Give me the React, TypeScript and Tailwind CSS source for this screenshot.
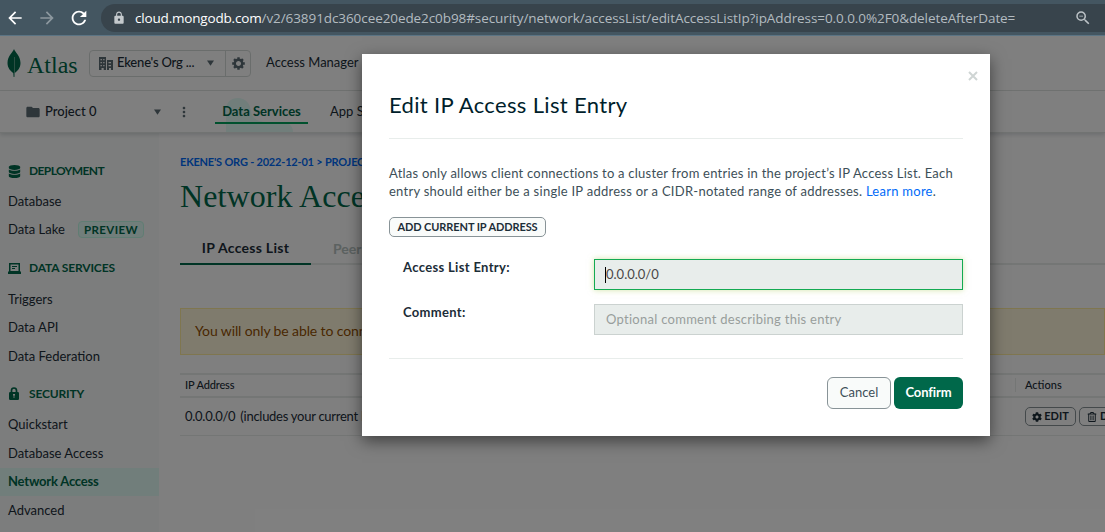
import React from "react";
import { FaDatabase, FaCog, FaRegTrashAlt } from "react-icons/fa";
import { MdFolder, MdLock, MdMoreVert, MdZoomOut, MdRefresh, MdArrowBack, MdArrowForward } from "react-icons/md";

function Caret({ className }: { className?: string }) {
  return (
    <svg viewBox="0 0 8 6" className={`h-[6px] w-[7px] shrink-0 fill-[#5c6c75] ${className ?? ""}`}>
      <path d="M0 0h8L4 6z" />
    </svg>
  );
}

function BrowserBar() {
  return (
    <div className="flex h-[36px] items-center border-b border-[#5b7484] bg-[#445661]">
      <MdArrowBack className="ml-[5px] size-[20px] shrink-0 text-white" />
      <MdArrowForward className="ml-[12px] size-[20px] shrink-0 text-[#8d989f]" />
      <MdRefresh className="ml-[11px] size-[22px] shrink-0 text-white" />
      <div className="ml-[11px] flex h-[28px] flex-1 items-center rounded-l-full bg-[#38444c]">
        <MdLock className="ml-[11px] size-[14px] shrink-0 text-[#c4c9cc]" />
        <div className="ml-[9px] whitespace-nowrap font-['Open_Sans',sans-serif] text-[13.500px] leading-[20px] tracking-[-0.08px] text-[#b3bbc0]">
          <span className="tracking-[-0.18px] text-white">cloud.mongodb.com</span>
          <span>/v2/63891dc360cee20ede2c0b98#security/network/accessList/editAccessListIp?ipAddress=0.0.0.0%2F0&amp;deleteAfterDate=</span>
        </div>
        <MdZoomOut className="ml-auto mr-[13px] size-[18px] shrink-0 text-[#bcc3c7]" />
      </div>
    </div>
  );
}

function TopNav() {
  return (
    <div className="flex h-[55px] items-center border-b border-[#e2e6e5] pl-[7px]">
      <svg viewBox="0 0 14 28" className="mb-px h-[28px] w-[14px] shrink-0">
        <path d="M7 0C8 3 13.500 7 13.500 14c0 5-3 8-5.800 10L7.400 28h-.8L6.300 24C3.500 22 .5 19 .5 14 .5 7 6 3 7 0z" fill="#00684a" />
        <path d="M7 8v16l.4 3V8z" fill="#d6eee4" />
      </svg>
      <div className="ml-[6px] w-[49px] whitespace-nowrap pt-[4px] font-['Liberation_Serif',serif] text-[24px] leading-[28px] text-[#00684a]">Atlas</div>
      <div className="ml-[13px] flex h-[27px] w-[162px] shrink-0 items-center rounded-[4px] border border-[#d5dbd9] text-[13px]">
        <svg viewBox="0 0 14 14" className="ml-[9px] h-[14px] w-[14px] shrink-0" fill="#5c6c75">
          <path fillRule="evenodd" d="M0 1h7v13H4.700v-2H2.500v2H0zM1.500 3v1.200h1.400V3zm2.700 0v1.200h1.300V3zM1.500 6v1.200h1.400V6zm2.700 0v1.200h1.300V6zM1.500 9v1.200h1.400V9zm2.700 0v1.200h1.300V9zM8 4h6v10h-2v-2h-2v2H8zm1.500 2v1.200H12V6zm0 3v1.200H12V9z" />
        </svg>
        <span className="ml-[4px] w-[90px] whitespace-nowrap font-medium tracking-[-0.2px] text-[#1c2d38]">Ekene's Org ...</span>
        <Caret />
        <div className="ml-auto flex h-full w-[25px] items-center justify-center border-l border-[#d5dbd9]">
          <svg viewBox="-7 -7 14 14" className="size-[13px]" stroke="#5c6c75" fill="none">
            <circle r="4" strokeWidth="2.600" />
            <path d="M0-6.800V-4M0 6.800V4M-6.800 0H-4M6.800 0H4M-4.800-4.800l2 2M4.800 4.800l-2-2M-4.800 4.800l2-2M4.800-4.800l-2 2" strokeWidth="2.600" />
          </svg>
        </div>
      </div>
      <span className="ml-[15px] whitespace-nowrap text-[13px] text-[#1c2d38]">Access Manager</span>
    </div>
  );
}

function ProjectNav() {
  return (
    <div className="relative flex h-[42px] items-center border-b border-[#e2e6e5] pl-[25px] shadow-[0_2px_4px_rgba(0,30,43,0.15)]">
      <MdFolder className="size-[16px] shrink-0 text-[#5c6c75]" />
      <span className="ml-[4px] w-[109px] whitespace-nowrap text-[13px] font-medium text-[#1c2d38]">Project 0</span>
      <Caret />
      <MdMoreVert className="ml-[15px] size-[16px] shrink-0 text-[#5c6c75]" />
      <div className="relative ml-[23px] flex h-full w-[93px] shrink-0 items-center justify-center">
        <svg viewBox="0 0 67 34" className="absolute bottom-0 left-[11px] h-[34px] w-[67px]">
          <path d="M0 34V12C0 4 5 0 12 0s12 5 13 13c1 8 7 11 16 11h14c8 0 12 4 12 10z" fill="#e3fcf7" />
        </svg>
        <span className="relative whitespace-nowrap text-[13px] font-bold text-[#00684a]">Data Services</span>
        <div className="absolute inset-x-0 bottom-[8px] h-[2px] bg-[#00a35c]" />
      </div>
      <span className="ml-[22px] whitespace-nowrap text-[13px] text-[#1c2d38]">App Services</span>
    </div>
  );
}

function SideHeading({ icon, children, tight }: { icon: React.ReactNode; children: string; tight?: boolean }) {
  return (
    <div className="flex h-[34px] items-center pl-[8px] text-[12px] font-bold text-[#00684a]">
      <span className="flex w-[21px] shrink-0">{icon}</span>
      <span className={`whitespace-nowrap ${tight ? "tracking-[-0.6px]" : "tracking-[-0.15px]"}`}>{children}</span>
    </div>
  );
}

function SideItem({ children, active, badge }: { children: string; active?: boolean; badge?: string }) {
  return (
    <div className={`flex h-[28.500px] items-center whitespace-nowrap pl-[8px] text-[13px] ${active ? "bg-[#e3fcf7] font-bold tracking-[-0.2px] text-[#00684a]" : "text-[#1c2d38]"}`}>
      <span>{children}</span>
      {badge && (
        <span className="ml-auto mr-[15px] flex h-[17px] w-[66px] items-center justify-center rounded-[4px] border border-[#c0fae6] bg-[#e3fcf7] text-[11.500px] font-bold tracking-[0.4px] text-[#00684a]">{badge}</span>
      )}
    </div>
  );
}

function Sidebar() {
  return (
    <div className="w-[159px] shrink-0 bg-[#f9fbfa] pt-[21px]">
      <SideHeading tight icon={<FaDatabase className="size-[13px]" />}>DEPLOYMENT</SideHeading>
      <div className="-mt-px">
        <SideItem>Database</SideItem>
        <SideItem badge="PREVIEW">Data Lake</SideItem>
      </div>
      <div className="pt-[7px]">
        <SideHeading
          icon={
            <svg viewBox="0 0 13 11" className="h-[11px] w-[13px]" fill="#00684a">
              <path fillRule="evenodd" d="M1 0h11v8.500h1V11H0V8.500h1zm1.500 1.500v6.500h8V1.500zM4 3h5v1H4zm0 2h3v1H4z" />
            </svg>
          }
        >
          DATA SERVICES
        </SideHeading>
      </div>
      <SideItem>Triggers</SideItem>
      <SideItem>Data API</SideItem>
      <SideItem>Data Federation</SideItem>
      <div className="pt-[6px]">
        <SideHeading
          icon={
            <svg viewBox="0 0 12 13" className="h-[13px] w-[12px]">
              <path d="M3.500 6V3.500a2.500 2.500 0 0 1 5 0V6" fill="none" stroke="#00684a" strokeWidth="1.700" />
              <rect x="1" y="5" width="10" height="8" rx="1.200" fill="#00684a" />
              <path d="M5 7h2v1.500h-.6V11h-.8V8.500H5z" fill="#f9fbfa" />
            </svg>
          }
        >
          SECURITY
        </SideHeading>
      </div>
      <SideItem>Quickstart</SideItem>
      <SideItem>Database Access</SideItem>
      <SideItem active>Network Access</SideItem>
      <SideItem>Advanced</SideItem>
    </div>
  );
}

function Content() {
  return (
    <div className="min-w-0 flex-1 overflow-hidden pl-[21px] pt-[21px]">
      <div className="h-[16px] whitespace-nowrap text-[11px] font-bold leading-[16px] tracking-[-0.2px] text-[#016bf8]">EKENE'S ORG - 2022-12-01 &gt; PROJECT 0</div>
      <div className="mt-[6px] h-[42px] whitespace-nowrap font-['Liberation_Serif',serif] text-[32px] leading-[40px] tracking-[0.1px] text-[#00684a]">Network Access</div>
      <div className="mt-[13px] flex h-[34px] border-b-2 border-[#e8edeb] text-[14px]">
        <div className="flex h-[34px] w-[131px] shrink-0 items-center justify-center border-b-2 border-[#00684a] font-bold tracking-[0.27px] text-[#1c2d38]">IP Access List</div>
        <div className="flex h-[34px] items-center pl-[22px] font-bold text-[#b8c4c2]">Peering</div>
      </div>
      <div className="mt-[43px] flex h-[47px] items-center whitespace-nowrap border border-[#ffec9e] bg-[#fef7db] pb-[2px] pl-[14px] text-[14px] tracking-[-0.12px] text-[#944f01]">
        You will only be able to connect to your cluster from the following list of IP Addresses:
      </div>
      <div className="mt-[18px] flex h-[25px] items-center border-y-2 border-[#e8edeb] pb-px pl-[5px] text-[11px] font-medium text-[#1c2d38]">
        <span className="w-[830px] shrink-0 tracking-[-0.15px]">IP Address</span>
        <div className="flex h-[14px] items-center border-l border-[#e8edeb] pl-[9px]">Actions</div>
      </div>
      <div className="flex h-[38px] items-center border-b border-[#e8edeb] pl-[5px] text-[#1c2d38]">
        <div className="flex w-[840px] shrink-0 gap-[5px] whitespace-nowrap text-[13px] tracking-[-0.27px]">
          <span>0.0.0.0/0</span>
          <span>(includes your current IP address)</span>
        </div>
        <div className="flex h-[19px] w-[51px] shrink-0 items-center justify-center gap-[2px] rounded-[5px] border border-[#889397] text-[11px] font-bold"><FaCog className="size-[10px]" />EDIT</div>
        <div className="ml-[3px] flex h-[19px] w-[68px] shrink-0 items-center gap-[3px] rounded-[5px] border border-[#889397] pl-[7px] text-[11px] font-bold"><FaRegTrashAlt className="size-[10px]" />DELETE</div>
      </div>
    </div>
  );
}

function Modal() {
  return (
    <div className="absolute left-[362px] top-[54px] flex h-[382px] w-[628px] flex-col bg-white px-[27px] text-[#3d4f58] shadow-[0_5px_15px_rgba(0,0,0,0.5)]">
      <svg viewBox="0 0 10 10" className="absolute right-[12px] top-[17px] size-[10px]">
        <path d="M1 1l8 8M9 1L1 9" stroke="#cfd5d4" strokeWidth="2" />
      </svg>
      <div className="flex h-[85px] shrink-0 items-center border-b border-[#e8edeb] pt-[16px] text-[22px] tracking-[0.34px] text-[#001e2b]"><span className="whitespace-nowrap">Edit IP Access List Entry</span></div>
      <div className="mt-[25px] whitespace-nowrap text-[13px] leading-[18px] tracking-[0.225px]">
        <div>Atlas only allows client connections to a cluster from entries in the project’s IP Access List. Each</div>
        <div className="tracking-[0.26px]">entry should either be a single IP address or a CIDR-notated range of addresses. <span className="text-[#016bf8]">Learn more</span>.</div>
      </div>
      <button className="mt-[17px] flex h-[20px] w-[157px] shrink-0 items-center justify-center whitespace-nowrap rounded-[5px] border border-[#889397] bg-[#f9fbfa] text-[11px] font-bold tracking-[-0.1px] text-[#1c2d38]">ADD CURRENT IP ADDRESS</button>
      <div className="mt-[22px] flex">
        <label className="-mt-px w-[205px] shrink-0 pl-[14px] text-[13px] font-bold leading-[18px] tracking-[0.33px] text-[#1c2d38]">Access List Entry:</label>
        <div className="flex h-[31px] flex-1 items-center border border-[#13aa52] bg-[#e8edeb] pl-[10px] text-[13px] text-[#494747] shadow-[0_0_6px_rgba(180,210,110,0.6)]">
          <span className="h-[16px] w-px bg-black" />
          <span>0.0.0.0/0</span>
        </div>
      </div>
      <div className="mt-[14px] flex">
        <label className="-mt-px w-[205px] shrink-0 pl-[14px] text-[13px] font-bold leading-[18px] tracking-[0.33px] text-[#1c2d38]">Comment:</label>
        <div className="flex h-[31px] flex-1 items-center border border-[#cbd2d0] bg-[#e8edeb] pl-[11px] text-[13px] tracking-[0.27px] text-[#989e9c]">Optional comment describing this entry</div>
      </div>
      <div className="mt-[23px] flex justify-end gap-[3px] border-t border-[#e8edeb] pt-[18px] text-[13px]">
        <button className="h-[32px] w-[64px] rounded-[6px] border border-[#889397] bg-[#f9fbfa] text-[#3d4f58]">Cancel</button>
        <button className="h-[32px] w-[69px] rounded-[6px] bg-[#00684a] font-bold tracking-[-0.1px] text-white">Confirm</button>
      </div>
    </div>
  );
}

export default function App() {
  return (
    <div className="relative flex h-[532px] w-[1105px] flex-col overflow-hidden bg-white font-['Lato',sans-serif]">
      <BrowserBar />
      <div className="relative flex min-h-0 flex-1 flex-col">
        <TopNav />
        <ProjectNav />
        <div className="flex min-h-0 flex-1">
          <Sidebar />
          <Content />
        </div>
        <div className="absolute inset-0 bg-black/50" />
      </div>
      <Modal />
    </div>
  );
}
